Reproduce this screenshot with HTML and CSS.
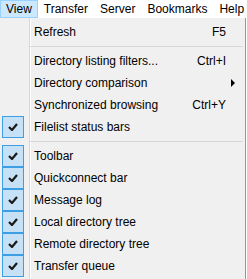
FILE: index.html
```html
<!DOCTYPE html>
<html lang="en">
<head>
    <meta charset="UTF-8">
    <title>View menu</title>
    <link rel="stylesheet" href="styles.css">
</head>
<body>
    <div class="menubar">
        <span class="top-item active">View</span>
        <span class="top-item">Transfer</span>
        <span class="top-item">Server</span>
        <span class="top-item">Bookmarks</span>
        <span class="top-item">Help</span>
    </div>

    <div class="dropdown">
        <div class="item">
            <span class="check"></span>
            <span class="label">Refresh</span>
            <span class="shortcut">F5</span>
        </div>
        <div class="separator"></div>
        <div class="item">
            <span class="check"></span>
            <span class="label">Directory listing filters...</span>
            <span class="shortcut">Ctrl+I</span>
        </div>
        <div class="item">
            <span class="check"></span>
            <span class="label">Directory comparison</span>
            <span class="arrow"></span>
        </div>
        <div class="item">
            <span class="check"></span>
            <span class="label">Synchronized browsing</span>
            <span class="shortcut">Ctrl+Y</span>
        </div>
        <div class="item">
            <span class="check checked"><svg viewBox="0 0 10 8" width="10" height="8"><polyline points="1,4 4,7 9,1"/></svg></span>
            <span class="label">Filelist status bars</span>
        </div>
        <div class="separator"></div>
        <div class="item">
            <span class="check checked"><svg viewBox="0 0 10 8" width="10" height="8"><polyline points="1,4 4,7 9,1"/></svg></span>
            <span class="label">Toolbar</span>
        </div>
        <div class="item">
            <span class="check checked"><svg viewBox="0 0 10 8" width="10" height="8"><polyline points="1,4 4,7 9,1"/></svg></span>
            <span class="label">Quickconnect bar</span>
        </div>
        <div class="item">
            <span class="check checked"><svg viewBox="0 0 10 8" width="10" height="8"><polyline points="1,4 4,7 9,1"/></svg></span>
            <span class="label">Message log</span>
        </div>
        <div class="item">
            <span class="check checked"><svg viewBox="0 0 10 8" width="10" height="8"><polyline points="1,4 4,7 9,1"/></svg></span>
            <span class="label">Local directory tree</span>
        </div>
        <div class="item">
            <span class="check checked"><svg viewBox="0 0 10 8" width="10" height="8"><polyline points="1,4 4,7 9,1"/></svg></span>
            <span class="label">Remote directory tree</span>
        </div>
        <div class="item">
            <span class="check checked"><svg viewBox="0 0 10 8" width="10" height="8"><polyline points="1,4 4,7 9,1"/></svg></span>
            <span class="label">Transfer queue</span>
        </div>
    </div>
</body>
</html>
```

FILE: styles.css
```css
:root {
    --menu-bg: #f0f0f0;
    --hover-bg: #cce8ff;
    --hover-border: #99d1ff;
    --check-bg: #c6e0f5;
    --check-border: #3c9fe3;
    --line: #d7d7d7;
}

* {
    box-sizing: border-box;
    margin: 0;
    padding: 0;
}

body {
    font-family: 'Liberation Sans', Arial, sans-serif;
    font-size: 12px;
    color: #000;
    background-color: #ffffff;
    overflow: hidden;
}

.menubar {
    display: flex;
    height: 18px;
    background-color: #ffffff;
    white-space: nowrap;
}

.top-item {
    display: flex;
    align-items: center;
    padding: 0 5px;
    border: 1px solid transparent;
}

.top-item.active {
    background-color: var(--hover-bg);
    border-color: var(--hover-border);
}

.dropdown {
    width: 246px;
    padding: 3px 0 6px;
    border-right: 1px solid #979797;
    /* gutter divider: gray line with white highlight */
    background:
        linear-gradient(to right, transparent 29px, var(--line) 29px, var(--line) 30px, #fff 30px, #fff 31px, transparent 31px),
        var(--menu-bg);
}

.item {
    display: flex;
    align-items: center;
    height: 22px;
    white-space: nowrap;
}

.check {
    display: flex;
    align-items: center;
    justify-content: center;
    flex: none;
    width: 22px;
    height: 22px;
    margin: 0 10px 0 2px;
    border: 1px solid transparent;
}

.check.checked {
    background-color: var(--check-bg);
    border-color: var(--check-border);
}

.check svg polyline {
    fill: none;
    stroke: #1a1a1a;
    stroke-width: 2.2;
}

.label {
    flex: 1;
}

.shortcut {
    padding-right: 19px;
}

.arrow {
    width: 0;
    height: 0;
    margin-right: 10px;
    border-top: 4px solid transparent;
    border-bottom: 4px solid transparent;
    border-left: 4px solid #000;
}

.separator {
    height: 7px;
    padding-top: 3px;
    margin: 0 2px 0 30px;
}

.separator::before {
    content: "";
    display: block;
    border-top: 1px solid var(--line);
}
```
